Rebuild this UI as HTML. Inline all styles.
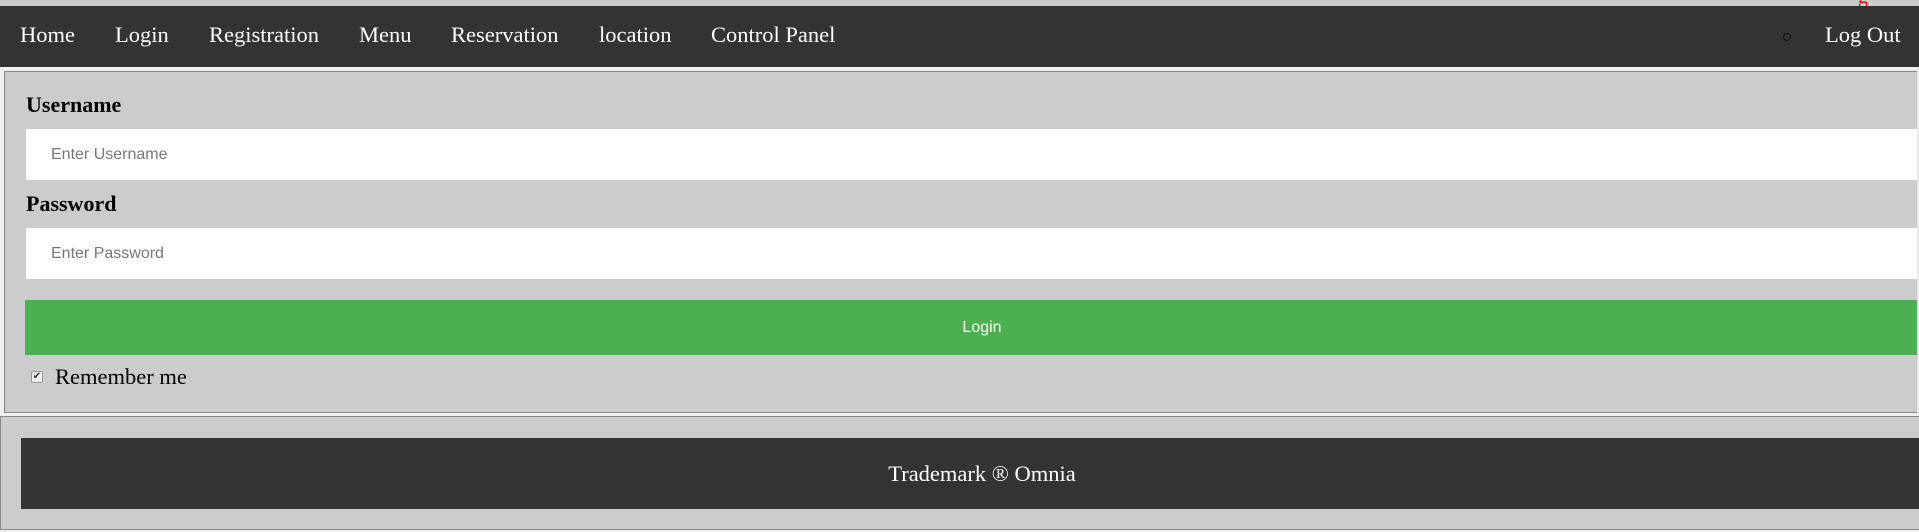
<!DOCTYPE html>
<html><head><style>
*{margin:0;padding:0;box-sizing:border-box}
body{width:1919px;height:532px;background:#f0f0f0;position:relative;overflow:hidden;font-family:"Liberation Serif",serif}
.top{position:absolute;left:0;top:0;width:1919px;height:6px;background:#ccc}
.nav{position:absolute;left:0;top:6px;width:1919px;height:61px;background:#333}
.nav span{position:absolute;top:16px;color:#fff;font-size:22.5px;line-height:26px}
.box{position:absolute;left:4px;top:71px;width:1913px;height:342px;background:#ccc;border:1px solid #888;border-right:none}
.lbl{position:absolute;left:26px;font-weight:bold;font-size:22px;color:#000}
.inp{position:absolute;left:26px;width:1893px;height:51px;background:#fff;font-family:"Liberation Sans",sans-serif;font-size:16px;color:#777;padding-left:25px;line-height:51px}
.btn{position:absolute;left:25px;top:300px;width:1894px;height:55px;background:#4caf50;color:#fff;font-family:"Liberation Sans",sans-serif;font-size:16px;text-align:center;line-height:55px;padding-left:20px}
.foot{position:absolute;left:0;top:416px;width:1919px;height:114px;background:#ccc;border:1px solid #888;border-right:none}
.fd{position:absolute;left:21px;top:438px;width:1898px;height:71px;background:#333;color:#fff;font-size:22.5px;text-align:center;line-height:71px;padding-left:24px}
.rs{position:absolute;left:1917px;top:71px;width:2px;height:342px;background:#e8e8e8}
</style></head><body>
<div class="top"></div>
<div style="position:absolute;left:1858px;top:-14px;color:#e00;font-size:20px">g</div>
<div class="nav">
<span style="left:20px">Home</span>
<span style="left:115px">Login</span>
<span style="left:209px">Registration</span>
<span style="left:359px">Menu</span>
<span style="left:451px">Reservation</span>
<span style="left:599px">location</span>
<span style="left:711px">Control Panel</span>
<div style="position:absolute;left:1783px;top:27px;width:8px;height:8px;border:1.5px solid #111;border-radius:50%"></div>
<span style="left:1825px">Log Out</span>
</div>
<div class="box"></div>
<div class="lbl" style="top:92px">Username</div>
<div class="inp" style="top:129px">Enter Username</div>
<div class="lbl" style="top:191px">Password</div>
<div class="inp" style="top:228px">Enter Password</div>
<div class="btn">Login</div>
<div style="position:absolute;left:31px;top:371px;width:12px;height:12px;background:#eee;border:1px solid #999;border-radius:2px;font-size:10px;line-height:10px;text-align:center;color:#333">✔</div>
<div style="position:absolute;left:55px;top:364px;font-size:22.5px;color:#000">Remember me</div>
<div class="rs"></div>
<div class="foot"></div>
<div class="fd">Trademark ® Omnia</div>
</body></html>
